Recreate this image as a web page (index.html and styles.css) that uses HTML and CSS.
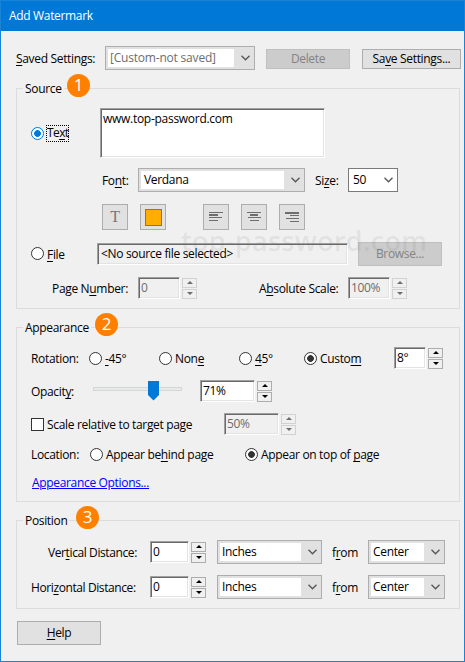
FILE: index.html
```html
<!DOCTYPE html>
<html>
<head>
  <meta charset="utf-8">
  <title>Add Watermark</title>
  <link rel="stylesheet" href="styles.css">
</head>
<body>
  <div class="dialog">
    <div class="title-bar">Add Watermark</div>

    <div class="row settings">
      <label class="saved-label"><u>S</u>aved Settings:</label>
      <div class="select saved-select muted"><span>[Custom-not saved]</span><svg viewBox="0 0 9 6"><path d="M.5 .8l4 4 4-4"/></svg></div>
      <button class="delete-button disabled">Delete</button>
      <button class="save-button">Sa<u>v</u>e Settings...</button>
    </div>

    <fieldset class="source">
      <legend>Source</legend>
      <span class="badge badge-1">1</span>

      <div class="row text-row">
        <i class="radio checked blue"></i>
        <label class="focus">Te<u>x</u>t</label>
        <div class="field textarea">www.top-password.com</div>
      </div>

      <div class="row font-row">
        <label class="font-label">Fo<u>n</u>t:</label>
        <div class="select font-select"><span>Verdana</span><svg viewBox="0 0 9 6"><path d="M.5 .8l4 4 4-4"/></svg></div>
        <label class="size-label">Si<u>z</u>e:</label>
        <div class="select size-select"><span>50</span><svg viewBox="0 0 9 6"><path d="M.5 .8l4 4 4-4"/></svg></div>
      </div>

      <div class="row tools">
        <div class="tool letter">T</div>
        <div class="tool"><i class="color"></i></div>
        <div class="tool align"><svg width="14" height="10" viewBox="0 0 14 10"><path d="M0 .5h14M0 2.500h9M0 3.500h9M0 5.500h13M0 8.500h9"/></svg></div>
        <div class="tool"><svg width="14" height="10" viewBox="0 0 14 10"><path d="M0 .5h14M3 2.500h8M3 3.500h8M1 5.500h13M3 8.500h9"/></svg></div>
        <div class="tool"><svg width="14" height="10" viewBox="0 0 14 10"><path d="M0 .5h14M0 1.500h14M5 3.500h9M1 6.500h13M5 9.500h9"/></svg></div>
      </div>

      <div class="row file-row">
        <i class="radio"></i>
        <label class="file-label"><u>F</u>ile</label>
        <div class="field file-field">&lt;No source file selected&gt;</div>
        <button class="browse-button disabled">Browse...</button>
      </div>

      <div class="row page-row">
        <label class="page-label">Page N<u>u</u>mber:</label>
        <div class="field off page-field">0</div>
        <div class="spinner off"><i></i><i></i></div>
        <label class="scale-label">A<u>b</u>solute Scale:</label>
        <div class="field off page-field">100%</div>
        <div class="spinner off"><i></i><i></i></div>
      </div>
    </fieldset>

    <fieldset class="appearance">
      <legend>Appearance</legend>
      <span class="badge badge-2">2</span>

      <div class="row rotation-row">
        <label class="rotation-label">Rotation:</label>
        <i class="radio"></i><label class="rot-1"><u>-</u>45°</label>
        <i class="radio"></i><label class="rot-2">Non<u>e</u></label>
        <i class="radio"></i><label class="rot-3"><u>4</u>5°</label>
        <i class="radio checked"></i><label class="rot-4">Custo<u>m</u></label>
        <div class="field angle-field">8°</div>
        <div class="spinner"><i></i><i></i></div>
      </div>

      <div class="row opacity-row">
        <label class="opacity-label">Opacit<u>y</u>:</label>
        <div class="slider"><svg width="90" height="20" viewBox="0 0 90 20"><rect x=".5" y="6.5" width="88" height="3"/><path d="M55 0h11v14l-5.500 5.500l-5.500-5.500z"/></svg></div>
        <div class="field opacity-field">71%</div>
        <div class="spinner"><i></i><i></i></div>
      </div>

      <div class="row relative-row">
        <i class="checkbox"></i>
        <label class="relative-label">Scale rela<u>t</u>ive to target page</label>
        <div class="field off relative-field">50%</div>
        <div class="spinner off"><i></i><i></i></div>
      </div>

      <div class="row location-row">
        <label class="location-label">Location:</label>
        <i class="radio"></i><label class="behind-label">Appear be<u>h</u>ind page</label>
        <i class="radio checked"></i><label class="top-label">Appear on top of <u>p</u>age</label>
      </div>

      <a href="#" class="options-link">Appearance Options...</a>
    </fieldset>

    <fieldset class="position">
      <legend>Position</legend>
      <span class="badge badge-3">3</span>

      <div class="row distance-row">
        <label class="distance-label vertical">Ver<u>t</u>ical Distance:</label>
        <div class="field distance-field">0</div>
        <div class="spinner"><i></i><i></i></div>
        <div class="select unit-select"><span>Inches</span><svg viewBox="0 0 9 6"><path d="M.5 .8l4 4 4-4"/></svg></div>
        <label class="from-label">f<u>r</u>om</label>
        <div class="select from-select"><span>Center</span><svg viewBox="0 0 9 6"><path d="M.5 .8l4 4 4-4"/></svg></div>
      </div>

      <div class="row distance-row">
        <label class="distance-label">Hori<u>z</u>ontal Distance:</label>
        <div class="field distance-field">0</div>
        <div class="spinner"><i></i><i></i></div>
        <div class="select unit-select"><span>Inches</span><svg viewBox="0 0 9 6"><path d="M.5 .8l4 4 4-4"/></svg></div>
        <label class="from-label">f<u>r</u>om</label>
        <div class="select from-select"><span>Center</span><svg viewBox="0 0 9 6"><path d="M.5 .8l4 4 4-4"/></svg></div>
      </div>
    </fieldset>

    <button class="help-button"><u>H</u>elp</button>
    <div class="watermark">top-password.com</div>
  </div>
</body>
</html>
```
FILE: styles.css
```css
* {
  box-sizing: border-box;
}

body {
  margin: 0;
  font-family: "Open Sans", "Noto Sans", sans-serif;
  font-size: 12px;
  line-height: 16px;
  letter-spacing: -0.33px;
  color: #000;
}

.dialog {
  position: relative;
  width: 465px;
  height: 662px;
  border: 1px solid #1883d7;
  background: #f0f0f0;
  overflow: hidden;
}

.title-bar {
  height: 30px;
  padding: 7px 8px;
  background: #0078d7;
  color: #fff;
}

.row {
  display: flex;
  align-items: center;
  white-space: nowrap;
}

.row > * {
  flex: none;
}

label {
  padding-top: 2px;
}

u {
  text-decoration: underline;
  text-underline-offset: 2px;
  text-decoration-skip-ink: none;
}

button {
  height: 20px;
  padding: 0;
  border: 1px solid #adadad;
  background: #e1e1e1;
  color: #000;
  font: inherit;
  line-height: 16px;
  letter-spacing: inherit;
}

button.disabled {
  border-color: #bfbfbf;
  background: #ccc;
  color: #838383;
}

/* combo boxes */
.select {
  display: flex;
  align-items: center;
  height: 24px;
  padding: 2px;
  border: 1px solid #adadad;
  background: #e1e1e1;
}

.select span {
  flex: 1;
  height: 18px;
  padding: 1px 0 0 2px;
  background: #fff;
}

.select svg {
  width: 9px;
  height: 6px;
  margin: 0 2px 0 7px;
  fill: none;
  stroke: #555;
  stroke-width: 1.3;
}

.muted span {
  color: #6d6d6d;
  letter-spacing: -0.2px;
}

/* sunken inputs */
.field {
  height: 22px;
  padding: 2px 2px 0;
  border: 1px solid;
  border-color: #a0a0a0 #fff #fff #a0a0a0;
  box-shadow: inset 1px 1px #696969, inset -1px -1px #e3e3e3;
  background: #fff;
}

.field.off {
  background: #f0f0f0;
  color: #6d6d6d;
}

.spinner {
  display: flex;
  flex-direction: column;
  gap: 1px;
  margin-left: 2px;
}

.spinner i {
  display: flex;
  align-items: center;
  justify-content: center;
  width: 15px;
  height: 10px;
  border: 1px solid #adadad;
  background: #f0f0f0;
}

.spinner i::before {
  content: "";
  border: 3px solid transparent;
  border-top: 0;
  border-bottom: 3px solid #000;
}

.spinner i + i::before {
  border-top: 3px solid #000;
  border-bottom: 0;
}

.spinner.off i {
  border-color: #d2d2d2;
}

.spinner.off i::before {
  border-bottom-color: #6d6d6d;
}

.spinner.off i + i::before {
  border-top-color: #6d6d6d;
}

.radio {
  width: 13px;
  height: 13px;
  border: 1px solid #333;
  border-radius: 50%;
  background: #fff;
}

.radio.checked {
  background: radial-gradient(circle, #333 3px, #fff 3.7px);
}

.radio.blue {
  border-color: #0078d7;
  background: radial-gradient(circle, #0078d7 3px, #fff 3.7px);
}

.checkbox {
  width: 13px;
  height: 13px;
  border: 1px solid #333;
  background: #fff;
}

/* groups */
fieldset {
  position: relative;
  width: 444px;
  margin: 0 0 10px 15px;
  padding: 0;
  border: 1px solid #dcdcdc;
}

legend {
  height: 17px;
  margin-left: 6px;
  padding: 1px 2px 0;
}

.badge {
  position: absolute;
  top: -23px;
  width: 23px;
  height: 23px;
  border-radius: 50%;
  background: #ff8000;
  color: #fff;
  font-size: 17px;
  line-height: 22px;
  text-align: center;
}

.badge-1 { left: 50px; }
.badge-2 { left: 78px; }
.badge-3 { left: 59px; }

.settings {
  height: 24px;
  margin: 15px 0 10px 15px;
}

.saved-label {
  width: 89px;
}

.saved-select { width: 150px; }

.delete-button {
  width: 84px;
  margin: 2px 12px 0 11px;
}

.save-button {
  width: 99px;
  margin-top: 2px;
}

/* source */
.source { height: 229px; }

.text-row {
  height: 50px;
  margin: 11px 0 0 14px;
}

.focus {
  width: 23px;
  height: 17px;
  margin-left: 2px;
  padding: 0 0 0 1px;
  outline: 1px dotted #000;
  outline-offset: -1px;
  letter-spacing: -0.6px;
}

.textarea {
  width: 225px;
  height: 50px;
  margin-left: 31px;
  letter-spacing: -0.28px;
}

.font-row {
  height: 24px;
  margin: 10px 0 0 85px;
}

.font-label { width: 36px; }
.font-select { width: 167px; }

.font-select span { padding-left: 3px; }

.size-label {
  width: 33px;
  margin-left: 10px;
}

.size-select {
  width: 50px;
  border-color: #7a7a7a;
  background: #fff;
}

.tools {
  gap: 12px;
  margin: 12px 0 0 85px;
}

.tool {
  display: flex;
  align-items: center;
  justify-content: center;
  width: 26px;
  height: 26px;
  border: 1px solid #adadad;
  background: #e1e1e1;
}

.tool svg {
  stroke: #6d6d6d;
}

.letter {
  color: #777;
  font-family: "Liberation Serif", serif;
  font-size: 16px;
}

.align { margin-left: 25px; }

.color {
  width: 17px;
  height: 17px;
  border: 1px solid #777;
  background: #ffae00;
}

.file-row {
  height: 24px;
  margin: 12px 0 0 14px;
}

.file-row .radio { margin-bottom: 1px; }

.file-label {
  width: 50px;
  padding-left: 3px;
}

.file-field {
  width: 251px;
  margin-left: 3px;
  padding-left: 3px;
  background: #f0f0f0;
}

.browse-button {
  width: 84px;
  height: 24px;
  margin-left: 10px;
}

.page-row {
  height: 22px;
  margin: 11px 0 0 35px;
}

.page-label { width: 86px; }
.page-field { width: 42px; }

.scale-label {
  width: 89px;
  margin-left: 62px;
}

/* appearance */
.appearance { height: 183px; }

.rotation-row {
  height: 22px;
  margin: 11px 0 0 14px;
}

.rotation-label { width: 58px; }
.rot-1 { width: 57px; padding-left: 3px; }
.rot-2 { width: 67px; padding-left: 3px; }
.rot-3 { width: 52px; padding-left: 3px; }
.rot-4 { width: 77px; padding-left: 3px; }
.angle-field { width: 32px; }

.opacity-row {
  height: 22px;
  margin: 11px 0 0 14px;
}

.opacity-label { width: 62px; }

.slider {
  width: 90px;
  height: 20px;
}

.slider rect {
  fill: #e7eaea;
  stroke: #d6d6d6;
}

.slider path {
  fill: #0078d7;
}

.opacity-field {
  width: 55px;
  margin-left: 17px;
}

.relative-row {
  height: 22px;
  margin: 11px 0 0 14px;
}

.relative-label {
  width: 180px;
  padding-left: 3px;
}

.relative-field { width: 55px; }

.location-row {
  height: 18px;
  margin: 10px 0 0 14px;
}

.location-label { width: 59px; }

.behind-label {
  width: 142px;
  padding-left: 3px;
}

.top-label { padding-left: 3px; }

.options-link {
  display: block;
  width: 120px;
  margin: 12px 0 0 15px;
  color: #0000ff;
  white-space: nowrap;
}

/* position */
.position {
  height: 97px;
  margin-bottom: 12px;
}

.distance-row {
  height: 24px;
  margin: 11px 0 11px 14px;
}

.distance-label {
  width: 119px;
  letter-spacing: -0.4px;
}

.vertical { padding-left: 17px; }

.distance-field { width: 39px; }

.unit-select {
  width: 105px;
  margin-left: 11px;
}

.from-label {
  width: 36px;
  margin-left: 10px;
}

.from-select { width: 77px; }

.help-button {
  display: block;
  width: 84px;
  height: 24px;
  margin-left: 16px;
}

.watermark {
  position: absolute;
  top: 224px;
  left: 180px;
  color: rgba(120, 120, 120, 0.12);
  font-size: 27px;
  font-weight: 600;
  line-height: 32px;
  letter-spacing: 0.3px;
}
```
